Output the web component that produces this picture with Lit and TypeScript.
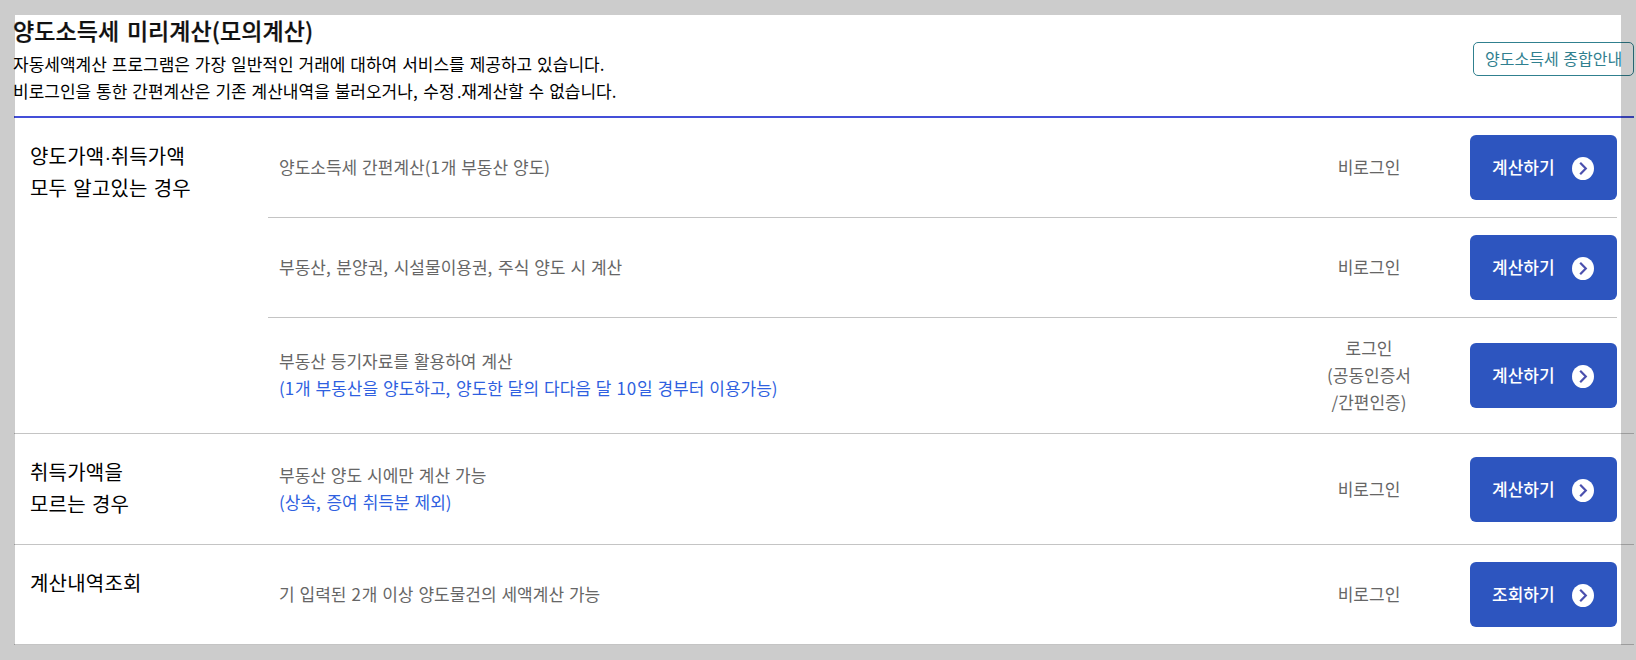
import { LitElement, html, css } from "lit";
import { customElement } from "lit/decorators.js";

interface Item {
  text: string;
  note?: string;
  login: string[];
  action: string;
}
interface Group {
  title: string[];
  items: Item[];
}

const GROUPS: Group[] = [
  {
    title: ["양도가액·취득가액", "모두 알고있는 경우"],
    items: [
      { text: "양도소득세 간편계산(1개 부동산 양도)", login: ["비로그인"], action: "계산하기" },
      { text: "부동산, 분양권, 시설물이용권, 주식 양도 시 계산", login: ["비로그인"], action: "계산하기" },
      {
        text: "부동산 등기자료를 활용하여 계산",
        note: "(1개 부동산을 양도하고, 양도한 달의 다다음 달 10일 경부터 이용가능)",
        login: ["로그인", "(공동인증서", "/간편인증)"],
        action: "계산하기",
      },
    ],
  },
  {
    title: ["취득가액을", "모르는 경우"],
    items: [
      { text: "부동산 양도 시에만 계산 가능", note: "(상속, 증여 취득분 제외)", login: ["비로그인"], action: "계산하기" },
    ],
  },
  {
    title: ["계산내역조회"],
    items: [{ text: "기 입력된 2개 이상 양도물건의 세액계산 가능", login: ["비로그인"], action: "조회하기" }],
  },
];

/* Opens up digits and commas, tightens the centre dots. */
const spaced = (text: string) =>
  text.split(/([0-9,]+|[·․])/).map((part, i) => {
    if (i % 2 === 0) return part;
    const cls = part === "·" ? "mid" : part === "․" ? "low" : "wide";
    return html`<span class=${cls}>${part}</span>`;
  });

@customElement("app-root")
export class AppRoot extends LitElement {
  static styles = css`
    :host {
      display: block;
      position: relative;
      box-sizing: border-box;
      height: 660px;
      padding: 15px 2px 0 14px;
      overflow: hidden;
      background: #fff;
      color: #111;
      font-family: "Noto Sans CJK KR", sans-serif;
      font-size: 17px;
      line-height: 27px;
      word-spacing: 1.1px;
    }
    .wide {
      letter-spacing: 0.8px;
    }
    .low {
      letter-spacing: -2.5px;
    }
    .mid {
      font-family: "Liberation Sans", sans-serif;
      line-height: 1;
      letter-spacing: -0.4px;
    }
    .head {
      display: flex;
      justify-content: space-between;
      align-items: flex-start;
      box-sizing: border-box;
      height: 103px;
      border-bottom: 2px solid #444fd8;
    }
    h1 {
      margin: 0;
      padding-bottom: 5px;
      font-size: 23px;
      line-height: 30px;
      font-weight: 500;
      letter-spacing: 0.07px;
      word-spacing: 2.5px;
      -webkit-text-stroke: 0.25px currentColor;
    }
    p {
      margin: 0;
      color: #000;
    }
    .intro {
      margin-left: -1px;
    }
    .guide {
      box-sizing: border-box;
      width: 161px;
      height: 34px;
      margin-top: 27px;
      padding-left: 11px;
      border: 1px solid #30808f;
      border-radius: 5px;
      color: #30808f;
      font-size: 16px;
      line-height: 31px;
      white-space: nowrap;
    }
    .group {
      display: grid;
      grid-template-columns: 254px 1fr;
      padding-right: 17px;
      border-bottom: 1px solid #c4c4c4;
    }
    .name {
      box-sizing: border-box;
      margin: 0;
      padding: 22px 0 0 16px;
      font-size: 20px;
      line-height: 32px;
      font-weight: 400;
      letter-spacing: 0.2px;
      word-spacing: 1.4px;
      color: #000;
    }
    .pair {
      min-height: 110px;
    }
    .items {
      display: flex;
      flex-direction: column;
    }
    .row {
      flex: 1 0 auto;
      display: grid;
      grid-template-columns: 1fr 202px 147px;
      align-items: center;
      padding: 17px 0;
      color: #666;
    }
    .row + .row {
      border-top: 1px solid #c4c4c4;
    }
    .desc,
    .login {
      margin: -1px 0 1px;
    }
    .desc {
      padding-left: 11px;
    }
    .noted {
      padding-bottom: 1px;
    }
    .note {
      color: #2f5fe0;
    }
    .login {
      text-align: center;
    }
    .btn {
      display: flex;
      align-items: center;
      justify-content: space-between;
      box-sizing: border-box;
      width: 147px;
      height: 65px;
      padding: 0 23px 0 22px;
      border: 0;
      border-radius: 6px;
      background: #2d55bf;
      color: #fff;
      font: inherit;
      font-weight: 500;
    }
    .btn span {
      margin: -1px 0 1px;
    }
    .btn svg {
      display: block;
      margin-top: 2px;
    }
    .dim {
      position: absolute;
      left: 15px;
      top: 15px;
      width: 1606px;
      height: 630px;
      box-shadow: 0 0 0 100px rgba(0, 0, 0, 0.2);
      pointer-events: none;
    }
  `;

  private renderRow(item: Item) {
    return html`<div class="row">
      <div class="desc ${item.note ? "noted" : ""}">
        <div>${spaced(item.text)}</div>
        ${item.note ? html`<div class="note">${spaced(item.note)}</div>` : ""}
      </div>
      <div class="login">${item.login.map((l) => html`<div>${l}</div>`)}</div>
      <button class="btn">
        <span>${item.action}</span>
        <svg width="22" height="23" viewBox="0 0 22 23">
          <ellipse cx="11" cy="11.5" rx="11" ry="11.5" fill="#fff" />
          <path d="M8.2 5.7 L13.8 11.5 L8.2 17.3" fill="none" stroke="#4b50ae" stroke-width="2.2" />
        </svg>
      </button>
    </div>`;
  }

  render() {
    return html`
      <header class="head">
        <div class="intro">
          <h1>양도소득세 미리계산(모의계산)</h1>
          <p>자동세액계산 프로그램은 가장 일반적인 거래에 대하여 서비스를 제공하고 있습니다.</p>
          <p>${spaced("비로그인을 통한 간편계산은 기존 계산내역을 불러오거나, 수정․재계산할 수 없습니다.")}</p>
        </div>
        <a class="guide">양도소득세 종합안내</a>
      </header>
      ${GROUPS.map(
        (g) => html`<section class="group">
          <h2 class="name ${g.title.length > 1 ? "pair" : ""}">${g.title.map((t) => html`<div>${spaced(t)}</div>`)}</h2>
          <div class="items">${g.items.map((i) => this.renderRow(i))}</div>
        </section>`
      )}
      <div class="dim"></div>
    `;
  }
}
